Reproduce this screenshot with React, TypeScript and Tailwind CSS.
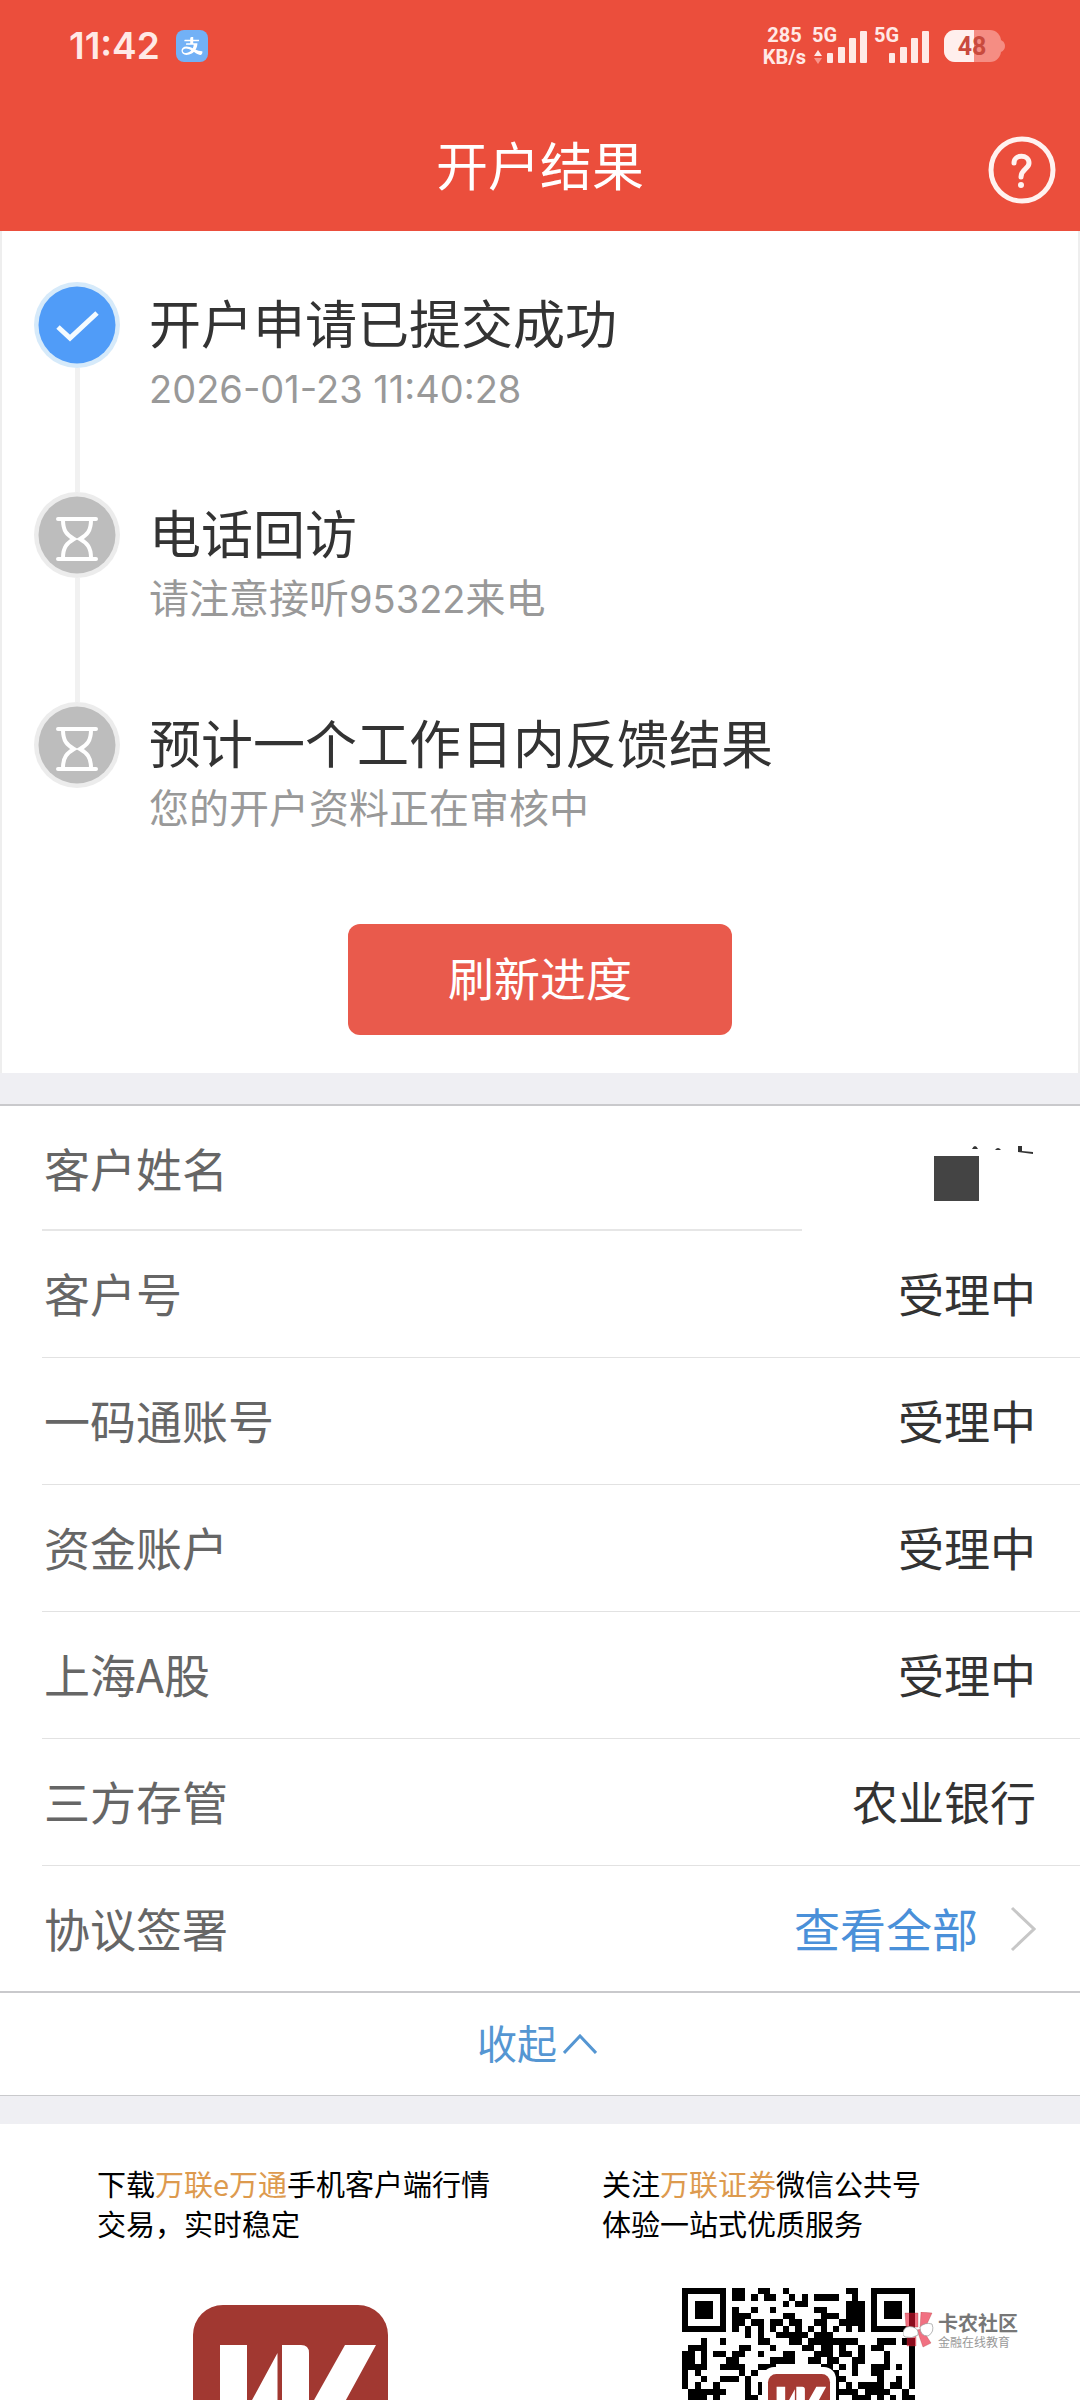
import { AiOutlineAlipay } from "react-icons/ai";

const steps = [
  {
    title: "开户申请已提交成功",
    note: <time className="font-[Inter,sans-serif] text-[38px]">2026-01-23 11:40:28</time>,
    done: true,
  },
  {
    title: "电话回访",
    note: (
      <>
        请注意接听<span className="font-[Inter,sans-serif] text-[38px]">95322</span>来电
      </>
    ),
    done: false,
  },
  { title: "预计一个工作日内反馈结果", note: "您的开户资料正在审核中", done: false },
];

const accountRows = [
  { label: "客户号", value: "受理中" },
  { label: "一码通账号", value: "受理中" },
  { label: "资金账户", value: "受理中" },
  { label: "上海A股", value: "受理中" },
  { label: "三方存管", value: "农业银行" },
];

const qrRows = [
  "#######.##..##..#.........##..#######",
  "#.....#.##.#.##..#.#.####..#..#.....#",
  "#.###.#.........#.##......###.#.###.#",
  "#.###.#.#..#..#......##...###.#.###.#",
  "#.###.#.###.....##....###.###.#.###.#",
  "#.....#.##.##.##.##..##..####.#.....#",
  "#######.#.#.#.#.#.#.#.#.#.#.#.#######",
  "..........#.#..#####.###.............",
  "...#..#.....##...##.########...###.##",
  ".###.....##...#....##.##.#..#.##....#",
  "##.#.##.##..#...##...###.##.#...#...#",
  "##.#...##.....####..##.##..##...#...#",
  "####..####..###.......##.#.#..###.#.#",
  "#.#......#.#...........##..#..##....#",
  "#..#..###.#.............##.....#..#.#",
  "#.#..#....#.#...........#.#.####.##.#",
  ".######...#.#...........####.####..#.",
  ".###.#....##............#..###.#.#.##",
];

function Signal({ arrows = false }: { arrows?: boolean }) {
  return (
    <svg width="56" height="48" viewBox="0 -6 56 48" fill="#ffe9e6">
      <text x="0" y="14" fontSize="20" fontWeight="700" fontFamily="Roboto, sans-serif">5G</text>
      {arrows && (
        <>
          <path d="M2 28 6 22l4 6z" />
          <path d="M2 30h8l-4 6z" fill="#f9958b" />
        </>
      )}
      <rect x="15" y="25" width="6" height="10" rx="1" />
      <rect x="26" y="19" width="7" height="16" rx="1" />
      <rect x="37" y="10" width="7" height="25" rx="1" />
      <rect x="48" y="3" width="7" height="32" rx="1" />
    </svg>
  );
}

function Battery() {
  return (
    <svg width="62" height="32" viewBox="0 0 62 32">
      <rect width="57" height="32" rx="11" fill="#f58d83" />
      <path d="M57 10q4 2 4 6t-4 6z" fill="#f58d83" />
      <path d="M30 0H11A11 11 0 0 0 0 11v10a11 11 0 0 0 11 11h19z" fill="#ffefed" />
      <text x="28" y="25" fontSize="25" fontWeight="700" textAnchor="middle" fill="#c94a3d" fontFamily="Roboto, sans-serif">48</text>
    </svg>
  );
}

function StatusBar() {
  return (
    <div className="flex h-[92px] items-center justify-between pl-[69px] pr-[74px] text-[#ffe9e6]">
      <div className="flex items-center gap-4">
        <span className="font-[Inter,sans-serif] text-[37px] font-semibold leading-[40px]">11:42</span>
        <span className="flex size-8 items-center justify-center rounded-lg bg-[#72b1f6]">
          <AiOutlineAlipay className="size-6 text-white" />
        </span>
      </div>
      <div className="flex items-center">
        <div className="mr-1.5 text-center font-[Roboto,sans-serif] text-[20px] font-bold leading-[22px]">
          <p>285</p>
          <p>KB/s</p>
        </div>
        <Signal arrows />
        <div className="ml-1.5 mr-3.5">
          <Signal />
        </div>
        <Battery />
      </div>
    </div>
  );
}

function StepIcon({ done }: { done: boolean }) {
  return (
    <svg width="86" height="86" viewBox="0 0 86 86" fill="none">
      <circle cx="43" cy="43" r="43" fill={done ? "#d6eafa" : "#ececec"} />
      <circle cx="43" cy="43" r="38.5" fill={done ? "#509cf8" : "#bdbdbd"} />
      {done ? (
        <path d="m24 45 12 11 27-25" stroke="#f4fbff" strokeWidth="5" />
      ) : (
        <g stroke="#fff" strokeWidth="4" strokeLinecap="round">
          <path d="M24 27h38M24 67h38" />
          <path d="M29 28c0 11 4 15 11 19-7 4-11 8-11 19M57 28c0 11-4 15-11 19 7 4 11 8 11 19" />
        </g>
      )}
    </svg>
  );
}

function LogoMark() {
  return (
    <path d="M27 40h27v60H27zM84.500 48v60H52zM89 40h19q8 0 8 8v60H89zM152 40h31l-35 64h-32z" fill="#fff" />
  );
}

function QrCode() {
  return (
    <svg className="block" width="233" height="112" viewBox="0 0 233 112" role="img" aria-label="微信公共号二维码">
      <g transform="scale(6.297)" shapeRendering="crispEdges">
        {qrRows.map((row, y) =>
          row.split("").map((cell, x) => cell === "#" && <rect key={`${x}-${y}`} x={x} y={y} width="1" height="1" />)
        )}
      </g>
      <rect x="80" y="79" width="74" height="74" rx="12" fill="#fff" />
      <g transform="translate(86 86) scale(.318)">
        <rect width="195" height="195" rx="26" fill="#a53a33" />
        <LogoMark />
      </g>
    </svg>
  );
}

function Watermark() {
  return (
    <div className="absolute left-[221px] top-[24px] flex gap-1 whitespace-nowrap">
      <svg width="31" height="36" viewBox="0 0 31 36">
        <g fill="#e8132f" fillOpacity=".6" stroke="#a33" strokeOpacity=".5" strokeWidth=".6">
          <path d="M2 1h13v14H3zM18 0l11 1-6 13-6 2zM4 25l9-3v12H4zM14 18l5-1 9 14-8 4z" />
        </g>
        <path d="M0 20q2-7 10-5 6 2 5 8-6 4-13 2-3-2-2-5z" fill="#fff" stroke="#999" strokeWidth=".7" />
        <path d="M17 15q5-5 12-3 3 8-4 12-8 0-8-9z" fill="#fff" stroke="#999" strokeWidth=".7" />
      </svg>
      <div>
        <p className="text-[20px] font-bold leading-[21px] text-[#777]">卡农社区</p>
        <p className="text-[12px] leading-[18px] text-[#999]">金融在线教育</p>
      </div>
    </div>
  );
}

export default function App() {
  return (
    <div className="w-full bg-white font-['Noto_Sans_CJK_SC',sans-serif] text-[#333]">
      <header className="bg-[#eb4e3c] text-white">
        <StatusBar />
        <div className="grid h-[139px] grid-cols-[1fr_auto_1fr] items-center px-6 pb-2 pt-3">
          <h1 className="col-start-2 text-[52px] leading-[72px]">开户结果</h1>
          <button type="button" aria-label="帮助" className="mt-3 justify-self-end">
            <svg width="68" height="68" viewBox="0 0 68 68" fill="none" stroke="#fff2f0">
              <circle cx="34" cy="34" r="31" strokeWidth="5" />
              <path d="M26 27c0-9 15-9 15 0 0 6-8 6-8 14" strokeWidth="5" strokeLinecap="round" />
              <circle cx="33" cy="49" r="3" fill="#fff2f0" stroke="none" />
            </svg>
          </button>
        </div>
      </header>

      <section className="border-x-2 border-[#eeeeee] pb-[38px] pt-[51px]">
        <ol className="pl-8">
          {steps.map((step, i) => (
            <li key={step.title} className="flex h-[210px] gap-[29px]">
              <div className="flex flex-col items-center">
                <StepIcon done={step.done} />
                {i < steps.length - 1 && <div className="w-[5px] flex-1 bg-[#f1f1f1]" />}
              </div>
              <div className="pt-1">
                <h2 className="text-[52px] leading-[72px]">{step.title}</h2>
                <p className="text-[40px] leading-[56px] text-[#999]">{step.note}</p>
              </div>
            </li>
          ))}
        </ol>
        <button type="button" className="mx-auto mt-3 block h-[111px] w-[384px] rounded-xl bg-[#e95a4c] pb-1.5 text-[46px] text-white">
          刷新进度
        </button>
      </section>

      <div className="h-[31px] bg-[#efeff3]" />

      <section className="border-y-2 border-[#c9c9cc] text-[46px] leading-[64px]">
        <dl className="pl-[42px]">
          <div className="relative flex h-[125px] items-center justify-between pb-1 pl-0.5 pr-11">
            <dt className="text-[#666]">客户姓名</dt>
            <dd className="pt-1">
              <svg width="104" height="64" viewBox="0 0 104 64" fill="#333">
                <rect x="2" y="19" width="45" height="45" fill="#444" />
                <path d="M40 12q3-6 6 0zM63 13q3-4 6 0zM86 9h4v5l11 1v2l-15-2z" />
              </svg>
            </dd>
            <div className="absolute bottom-0 left-0 right-[278px] h-0.5 bg-[#e6e6e6]" />
          </div>
          {accountRows.map((row) => (
            <div key={row.label} className="flex h-[127px] items-center justify-between border-b border-[#e2e2e2] pb-1 pl-0.5 pr-11">
              <dt className="text-[#666]">{row.label}</dt>
              <dd>{row.value}</dd>
            </div>
          ))}
          <div className="flex h-[125px] items-center justify-between pb-1 pl-0.5 pr-11">
            <dt className="text-[#666]">协议签署</dt>
            <dd>
              <a href="#agreements" className="flex items-center gap-8 text-[#4a90d9]">
                查看全部
                <svg className="mt-1" width="26" height="46" viewBox="0 0 26 46" fill="none" stroke="#c7c7c7" strokeWidth="3">
                  <path d="m2 2 22 21L2 44" />
                </svg>
              </a>
            </dd>
          </div>
        </dl>
      </section>

      <button type="button" className="flex h-[103px] w-full items-center justify-center gap-1.5 border-b border-[#c9c9cc] pb-1 pr-1.5 text-[40px] text-[#5596d2]">
        收起
        <svg className="mt-1" width="34" height="20" viewBox="0 0 34 20" fill="none" stroke="currentColor" strokeWidth="3">
          <path d="M1 19 17 2l16 17" />
        </svg>
      </button>

      <div className="h-[28px] bg-[#efeff3]" />

      <footer className="grid grid-cols-2 pt-[39px] text-[29px] leading-[40px] text-black">
        <div className="pl-[97px]">
          <p>
            下载<span className="text-[#dd9a4e]">万联e万通</span>手机客户端行情
            <br />
            交易，实时稳定
          </p>
          <svg className="ml-24 mt-[62px] block" width="195" height="95" viewBox="0 0 195 95" role="img" aria-label="万联e万通">
            <rect width="195" height="195" rx="30" fill="#a13831" />
            <LogoMark />
          </svg>
        </div>
        <div className="pl-[62px]">
          <p>
            关注<span className="text-[#dd9a4e]">万联证券</span>微信公共号
            <br />
            体验一站式优质服务
          </p>
          <div className="relative ml-20 mt-[45px]">
            <QrCode />
            <Watermark />
          </div>
        </div>
      </footer>
    </div>
  );
}
